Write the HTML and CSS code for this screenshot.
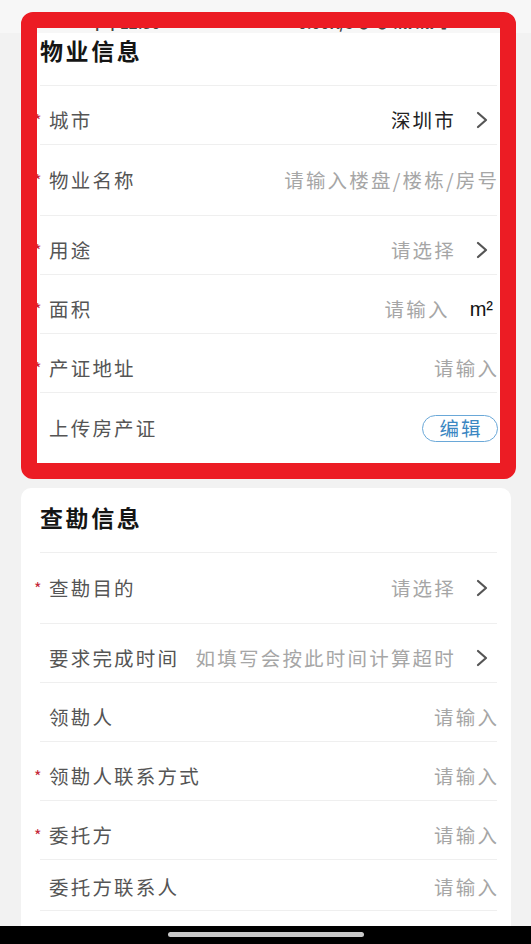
FILE: index.html
```html
<!DOCTYPE html>
<html lang="zh-CN">
<head>
<meta charset="utf-8">
<title>物业信息</title>
<link rel="stylesheet" href="styles.css">
</head>
<body>
<div class="statusbar">
  <span class="sb-left">下午12:30</span>
  <span class="sb-right">0.00K/s ⊗ ⊙ .ıll .ıll ᯤ</span>
</div>
<main class="page">
  <section class="card card--first">
    <h2 class="card-title">物业信息</h2>
    <div class="row">
      <span class="req">*</span><span class="label">城市</span>
      <span class="value value--dark">深圳市</span>
      <svg class="chev" viewBox="0 0 12 18" width="12" height="18"><path d="M2 2 L10 9 L2 16"/></svg>
    </div>
    <div class="row row--tall">
      <span class="req">*</span><span class="label">物业名称</span>
      <span class="value value--end">请输入楼盘/楼栋/房号</span>
    </div>
    <div class="row">
      <span class="req">*</span><span class="label">用途</span>
      <span class="value">请选择</span>
      <svg class="chev" viewBox="0 0 12 18" width="12" height="18"><path d="M2 2 L10 9 L2 16"/></svg>
    </div>
    <div class="row">
      <span class="req">*</span><span class="label">面积</span>
      <span class="value">请输入</span>
      <span class="unit">m²</span>
    </div>
    <div class="row">
      <span class="req">*</span><span class="label">产证地址</span>
      <span class="value value--end">请输入</span>
    </div>
    <div class="row row--tall row--last">
      <span class="req req--none"></span><span class="label">上传房产证</span>
      <span class="pill">编辑</span>
    </div>
  </section>

  <section class="card card--second">
    <h2 class="card-title card-title--second">查勘信息</h2>
    <div class="row row--tall">
      <span class="req">*</span><span class="label">查勘目的</span>
      <span class="value">请选择</span>
      <svg class="chev" viewBox="0 0 12 18" width="12" height="18"><path d="M2 2 L10 9 L2 16"/></svg>
    </div>
    <div class="row">
      <span class="req req--none"></span><span class="label">要求完成时间</span>
      <span class="value value--hint">如填写会按此时间计算超时</span>
      <svg class="chev" viewBox="0 0 12 18" width="12" height="18"><path d="M2 2 L10 9 L2 16"/></svg>
    </div>
    <div class="row">
      <span class="req req--none"></span><span class="label">领勘人</span>
      <span class="value value--end">请输入</span>
    </div>
    <div class="row">
      <span class="req">*</span><span class="label">领勘人联系方式</span>
      <span class="value value--end">请输入</span>
    </div>
    <div class="row">
      <span class="req">*</span><span class="label">委托方</span>
      <span class="value value--end">请输入</span>
    </div>
    <div class="row row--short">
      <span class="req req--none"></span><span class="label">委托方联系人</span>
      <span class="value value--end">请输入</span>
    </div>
  </section>
</main>

<div class="annotation"></div>

<div class="navbar"><span class="home-pill"></span></div>
</body>
</html>
```

FILE: styles.css
```css
html, body {
  margin: 0;
  padding: 0;
}
body {
  background: #f2f2f2;
  font-family: "Noto Sans CJK SC", "Noto Sans", sans-serif;
  height: 944px;
  overflow: hidden;
  position: relative;
}

.statusbar {
  height: 33px;
  background: #f7f7f7;
  display: flex;
  align-items: flex-end;
  justify-content: space-between;
  padding: 0 80px 0 90px;
  box-sizing: border-box;
  font-size: 15px;
  line-height: 18px;
  color: #444;
  font-weight: 600;
}
.sb-left, .sb-right {
  position: relative;
  top: -1px;
}

.page {
  padding: 0 20px 0 21px;
  display: flex;
  flex-direction: column;
  gap: 10px;
}

.card {
  background: #fff;
  border-radius: 10px;
  padding: 0 14px 0 19px;
}
.card--first {
  border-radius: 0 0 10px 10px;
  padding-bottom: 15px;
}
.card--second {
  padding-bottom: 40px;
}

.card-title {
  margin: 0;
  padding: 2px 0 20px;
  font-size: 23px;
  line-height: 30px;
  letter-spacing: 2.6px;
  font-weight: 700;
  color: #151515;
  border-bottom: 1px solid #efefef;
}
.card-title--second {
  padding-top: 14px;
}

.row {
  display: flex;
  align-items: center;
  padding: 20px 0 10px;
  line-height: 28px;
  border-bottom: 1px solid #efefef;
  font-size: 19.5px;
  letter-spacing: 2.2px;
}
.row--tall {
  padding: 21px 0 21px;
}
.row--short {
  padding: 13px 0 9px;
}
.row--last {
  border-bottom: none;
}

.req {
  width: 15px;
  margin-left: -6px;
  flex: none;
  color: #c4283a;
  font-size: 16px;
  letter-spacing: 0;
  line-height: 20px;
}
.label {
  color: #555;
  flex: none;
}
.value {
  margin-left: auto;
  color: #a6a6a6;
}
.value--end {
  margin-right: -2.2px;
}
.value--dark {
  color: #222;
}
.value--hint {
  white-space: nowrap;
}

.chev {
  flex: none;
  margin-left: 20px;
  margin-right: 9px;
  fill: none;
  stroke: #555;
  stroke-width: 2.2;
  stroke-linecap: round;
  stroke-linejoin: round;
}

.unit {
  margin-left: 20px;
  margin-right: 4px;
  color: #111;
  font-size: 20px;
  letter-spacing: 0;
  font-family: "Liberation Sans", "Noto Sans", sans-serif;
}

.pill {
  margin-left: auto;
  margin-right: -1px;
  width: 76px;
  height: 27px;
  box-sizing: border-box;
  border: 1.5px solid #6aa8d8;
  border-radius: 14px;
  color: #3a86c2;
  font-size: 19.5px;
  letter-spacing: 2px;
  line-height: 24px;
  display: flex;
  align-items: center;
  justify-content: center;
  padding-left: 2px;
}

.annotation {
  position: absolute;
  top: 12px;
  left: 21px;
  width: 495px;
  height: 467px;
  box-sizing: border-box;
  border: 16px solid #ec1c24;
  border-radius: 12px;
}

.navbar {
  position: absolute;
  left: 0;
  right: 0;
  bottom: 0;
  height: 18px;
  background: #000;
  display: flex;
  justify-content: center;
  padding-top: 6px;
  box-sizing: border-box;
}
.home-pill {
  width: 196px;
  height: 5px;
  border-radius: 3px;
  background: #c9c9c9;
}
```
